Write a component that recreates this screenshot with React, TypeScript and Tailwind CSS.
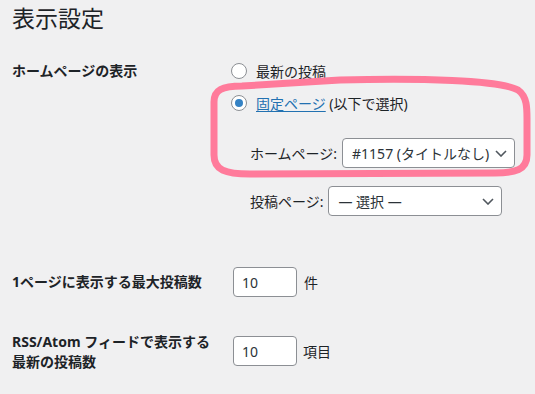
import React from 'react'

const font = { fontFamily: '"Noto Sans", "Noto Sans CJK JP", sans-serif' }

const Chevron = () => (
  <svg width="12" height="7" viewBox="0 0 12 7" className="shrink-0">
    <path d="M1 1l5 5 5-5" fill="none" stroke="#50575e" strokeWidth="1.6" />
  </svg>
)

const Radio = ({ checked }: { checked?: boolean }) => (
  <span className="flex h-4 w-4 shrink-0 items-center justify-center rounded-full border border-[#8c8f94] bg-white">
    {checked && <span className="h-2 w-2 rounded-full bg-[#3582c4]" />}
  </span>
)

const Select = ({ value, width }: { value: string; width: string }) => (
  <div
    className={`flex h-[30px] ${width} items-center justify-between rounded-[4px] border border-[#8c8f94] bg-white pl-[9px] pr-[7px] text-[14px] text-[#2c3338]`}
  >
    <span className="whitespace-nowrap">{value}</span>
    <Chevron />
  </div>
)

const NumberInput = ({ value }: { value: string }) => (
  <div className="flex h-[30px] w-[64px] items-center rounded-[4px] border border-[#8c8f94] bg-white pl-[8px] text-[14px] text-[#2c3338]">
    {value}
  </div>
)

export default function App() {
  return (
    <div
      className="relative h-[394px] w-[535px] overflow-hidden bg-[#f0f0f1] pl-[12px] text-[14px] text-[#1d2327]"
      style={font}
    >
      <h1 className="mt-[3px] h-[30px] text-[23px] font-normal leading-[30px] text-[#1d2327]">表示設定</h1>

      {/* ホームページの表示 */}
      <div className="mt-[28px] flex">
        <div className="w-[219px] shrink-0 font-bold leading-[20px]">ホームページの表示</div>
        <div className="flex flex-col">
          <label className="flex h-[20px] items-center gap-[9px]">
            <Radio />
            <span>最新の投稿</span>
          </label>
          <label className="mt-[12px] flex h-[20px] items-center gap-[9px]">
            <Radio checked />
            <span>
              <span className="text-[#2271b1] underline underline-offset-2">固定ページ</span> (以下で選択)
            </span>
          </label>
          <div className="mt-[25px] flex items-center gap-[5px] pl-[19px]">
            <span className="whitespace-nowrap">ホームページ:</span>
            <Select value="#1157 (タイトルなし)" width="w-[173px]" />
          </div>
          <div className="mt-[18px] flex items-center gap-[5px] pl-[19px]">
            <span className="whitespace-nowrap">投稿ページ:</span>
            <Select value="— 選択 —" width="w-[174px]" />
          </div>
        </div>
      </div>

      {/* 1ページに表示する最大投稿数 */}
      <div className="mt-[51px] flex items-center">
        <div className="w-[221px] shrink-0 font-bold leading-[20px]">1ページに表示する最大投稿数</div>
        <NumberInput value="10" />
        <span className="ml-[7px]">件</span>
      </div>

      {/* RSS/Atom */}
      <div className="mt-[35px] flex items-start">
        <div className="w-[221px] shrink-0 whitespace-nowrap font-bold leading-[19.5px]">
          RSS/Atom フィードで表示する
          <br />
          最新の投稿数
        </div>
        <div className="mt-[4px] flex items-center">
          <NumberInput value="10" />
          <span className="ml-[6px]">項目</span>
        </div>
      </div>

      {/* annotation highlight */}
      <svg className="pointer-events-none absolute left-0 top-0" width="535" height="394" viewBox="0 0 535 394">
        <path
          d="M214 102 C214 90 222 86 242 86 L340 80 C420 78 500 80 518 90 C528 97 527 110 527 125 L527 155 C527 170 515 173 495 173 L250 174 C225 174 214 170 214 155 Z"
          fill="none"
          stroke="#ff7b9b"
          strokeWidth="7"
        />
      </svg>
    </div>
  )
}
